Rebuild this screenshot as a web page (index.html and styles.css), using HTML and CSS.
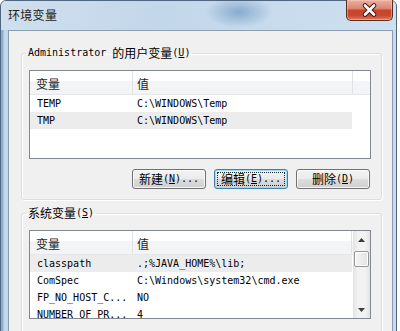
FILE: index.html
```html
<!DOCTYPE html>
<html lang="zh-CN">
<head>
<meta charset="UTF-8">
<title>环境变量</title>
<link rel="stylesheet" href="styles.css">
</head>
<body>

  <div class="window">
    <div class="titlebar">
      <span class="title">环境变量</span>
      <button class="close" type="button" aria-label="关闭">
        <svg width="45" height="20" viewBox="0 0 45 20">
          <path d="M18 5.5 L27 14.5 M27 5.5 L18 14.5" stroke="#4a1a14" stroke-width="4.6" stroke-linecap="round"/>
          <path d="M18 5.5 L27 14.5 M27 5.5 L18 14.5" stroke="#ffffff" stroke-width="2.6" stroke-linecap="round"/>
        </svg>
      </button>
    </div>

    <div class="client">
      <fieldset class="group">
        <legend><span class="m">Administrator&nbsp;</span>的用户变量<span class="m">(<u>U</u>)</span></legend>
        <div class="list">
          <div class="list-main">
            <div class="header">
              <div class="h-name">变量</div>
              <div class="h-value">值</div>
            </div>
            <div class="row">
              <span class="c-name m">TEMP</span>
              <span class="c-value m">C:\WINDOWS\Temp</span>
            </div>
            <div class="row sel">
              <span class="c-name m">TMP</span>
              <span class="c-value m">C:\WINDOWS\Temp</span>
            </div>
          </div>
        </div>
        <div class="buttons">
          <button class="btn" type="button">新建<span class="m">(<u>N</u>)...</span></button>
          <button class="btn focus" type="button">编辑<span class="m">(<u>E</u>)...</span></button>
          <button class="btn" type="button">删除<span class="m">(<u>D</u>)</span></button>
        </div>
      </fieldset>

      <fieldset class="group sys">
        <legend>系统变量<span class="m">(<u>S</u>)</span></legend>
        <div class="list">
          <div class="list-main">
            <div class="header short">
              <div class="h-name">变量</div>
              <div class="h-value">值</div>
            </div>
            <div class="row sel">
              <span class="c-name m">classpath</span>
              <span class="c-value m">.;%JAVA_HOME%\lib;</span>
            </div>
            <div class="row">
              <span class="c-name m">ComSpec</span>
              <span class="c-value m">C:\Windows\system32\cmd.exe</span>
            </div>
            <div class="row">
              <span class="c-name m">FP_NO_HOST_C...</span>
              <span class="c-value m">NO</span>
            </div>
            <div class="row">
              <span class="c-name m">NUMBER_OF_PR...</span>
              <span class="c-value m">4</span>
            </div>
          </div>
          <div class="scrollbar">
            <div class="sb-arrow">
              <svg width="7" height="4" viewBox="0 0 7 4"><path d="M0 4 L3.5 0 L7 4 Z" fill="#3c3c3c"/></svg>
            </div>
            <div class="sb-thumb"></div>
            <div class="sb-track"></div>
            <div class="sb-arrow">
              <svg width="7" height="4" viewBox="0 0 7 4"><path d="M0 0 L3.5 4 L7 0 Z" fill="#3c3c3c"/></svg>
            </div>
          </div>
        </div>
        <div class="buttons">
          <button class="btn" type="button">新建<span class="m">(<u>W</u>)...</span></button>
          <button class="btn" type="button">编辑<span class="m">(<u>I</u>)...</span></button>
          <button class="btn" type="button">删除<span class="m">(<u>L</u>)</span></button>
        </div>
      </fieldset>
    </div>
  </div>

</body>
</html>
```

FILE: styles.css
```css
* {
  box-sizing: border-box;
}

body {
  margin: 0;
  background: #ffffff;
  overflow: hidden;
  font-family: "Noto Sans CJK SC", sans-serif;
  font-size: 12px;
  color: #000;
}

.m {
  font-family: "DejaVu Sans Mono", "Liberation Mono", monospace;
  font-size: 10px;
}

.window {
  width: 397px;
  height: 360px;
  border: 1px solid #4f6680;
  border-radius: 6px 6px 0 0;
  background: linear-gradient(90deg, #8eaed0 0, #8eaed0 2px, #c4d8eb 3px, #c9dcee 100%);
}

.titlebar {
  display: flex;
  align-items: flex-start;
  height: 29px;
  border-radius: 5px 5px 0 0;
  background:
    radial-gradient(ellipse 34px 16px at 238px 11px, rgba(96, 140, 186, 0.6), rgba(96, 140, 186, 0)),
    linear-gradient(90deg, #cfdfee 0, #c3d7ea 40%, #cde0f0 100%);
}

.title {
  margin: 6px 0 0 7px;
  line-height: 16px;
  letter-spacing: 0.3px;
  color: #1a1a1a;
}

.close {
  margin: -1px 3px 0 auto;
  width: 47px;
  height: 21px;
  padding: 0;
  border: 1px solid #5d2a22;
  border-top: none;
  border-radius: 0 0 5px 5px;
  background: linear-gradient(#eab0a2 0, #dc8672 42%, #c8452c 52%, #c64a30 78%, #e07f5c 100%);
  box-shadow: inset 0 0 0 1px rgba(255, 210, 200, 0.45);
  display: flex;
  align-items: center;
  justify-content: center;
}

.client {
  margin: 0 3px 0 7px;
  height: 330px;
  padding: 15px 10px 0 12px;
  border: 1px solid #8b9db1;
  background: #f0f0f0;
}

.group {
  margin: 0;
  min-width: 0;
  padding: 10px 10px 10px 7px;
  border: 1px solid #d5dfe5;
  border-radius: 3px;
  box-shadow: inset 1px 1px 0 #ffffff, 1px 1px 0 #ffffff;
}

.group.sys {
  margin-top: 6px;
}

.group legend {
  display: flex;
  align-items: center;
  height: 14px;
  margin-left: -3px;
  padding: 0 2px;
  line-height: 14px;
  white-space: pre;
}

.list {
  display: flex;
  height: 89px;
  border: 1px solid #828790;
  background: #ffffff;
  overflow: hidden;
}

.list-main {
  flex: 1;
  min-width: 0;
}

.header {
  display: flex;
  height: 24px;
  border-bottom: 1px solid #e4e6ea;
  background: linear-gradient(#ffffff 0, #ffffff 45%, #f3f4f6 45%, #f3f4f6 100%);
}

.h-name,
.h-value {
  display: flex;
  align-items: center;
  padding-top: 1px;
  border-right: 1px solid #dfe3e8;
  color: #1e1e1e;
}

.h-name {
  width: 103px;
  padding-left: 6px;
}

.h-value {
  width: 220px;
  padding-left: 4px;
}

.header.short .h-value {
  width: 219px;
}

.row {
  display: flex;
  align-items: center;
  height: 17px;
  width: 322px;
  white-space: nowrap;
}

.row.sel {
  background: #ececec;
}

.c-name {
  width: 103px;
  padding-left: 7px;
  line-height: 15px;
  overflow: hidden;
}

.c-value {
  width: 219px;
  padding-left: 4px;
  line-height: 15px;
  overflow: hidden;
}

.scrollbar {
  width: 17px;
  display: flex;
  flex-direction: column;
  background: linear-gradient(90deg, #e3e3e3 0, #f2f2f2 30%, #f2f2f2 70%, #e3e3e3 100%);
}

.sb-arrow {
  height: 17px;
  display: flex;
  align-items: center;
  justify-content: center;
}

.sb-thumb {
  height: 16px;
  margin: 3px 1px 0;
  border: 1px solid #979797;
  border-radius: 2px;
  background: linear-gradient(90deg, #f6f6f6, #e2e2e2);
  box-shadow: inset 0 0 0 1px #ffffff;
}

.sb-track {
  flex: 1;
}

.buttons {
  display: flex;
  justify-content: flex-end;
  gap: 8px;
  margin-top: 10px;
  padding-right: 1px;
}

.sys .buttons {
  margin-top: 12px;
}

.btn {
  display: flex;
  align-items: center;
  justify-content: center;
  width: 74px;
  height: 20px;
  padding: 0;
  border: 1px solid #707070;
  border-radius: 3px;
  background: linear-gradient(#f2f2f2 0, #ebebeb 50%, #dddddd 50%, #cfcfcf 100%);
  box-shadow: inset 0 0 0 1px rgba(255, 255, 255, 0.8);
  font-family: "Noto Sans CJK SC", sans-serif;
  font-size: 12px;
  line-height: 16px;
  color: #000;
}

.btn.focus {
  border-color: #3c7fb1;
  box-shadow: inset 0 0 0 1px #9fdcf6;
  outline: 1px dotted #222;
  outline-offset: -4px;
}
```
